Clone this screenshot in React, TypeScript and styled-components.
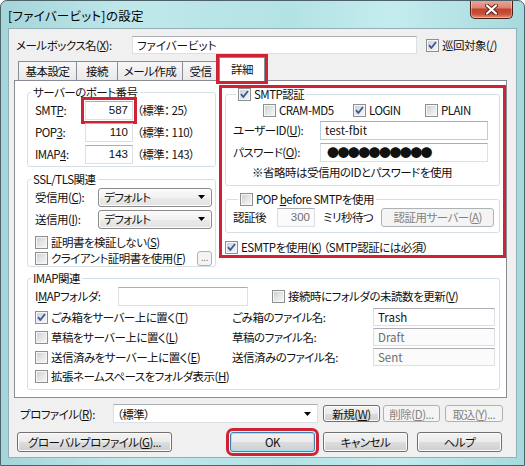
import React from "react";
import styled, { createGlobalStyle, css } from "styled-components";

const GlobalStyle = createGlobalStyle`
  html, body {
    margin: 0;
    padding: 0;
    background: #fff;
  }
  body {
    font-family: "Noto Sans CJK JP", "Noto Sans", sans-serif;
    font-size: 11.5px;
    letter-spacing: -0.5px;
    font-feature-settings: "palt";
    color: #111;
  }
  * {
    box-sizing: border-box;
  }
  u {
    text-underline-offset: 1px;
  }
`;

const RED = "#cf2234";

const Window = styled.div`
  width: 525px;
  height: 466px;
  display: flex;
  flex-direction: column;
  border: 1px solid #4d6268;
  border-radius: 7px 7px 0 0;
  background: linear-gradient(
    90deg,
    #a4d5da 0%,
    #c0e8eb 25%,
    #b3e2e5 55%,
    #c4ecee 75%,
    #a6dade 100%
  );
  overflow: hidden;
`;

const TitleBar = styled.div`
  height: 27px;
  display: flex;
  align-items: flex-start;
  justify-content: space-between;
  padding-left: 7px;
`;

const Title = styled.div`
  margin-top: 5px;
  font-size: 12.5px;
  letter-spacing: 0.3px;
  color: #000;
`;

const CloseButton = styled.div`
  width: 43px;
  height: 19px;
  margin-right: 11px;
  margin-top: -1px;
  border: 1px solid #4f1d16;
  border-top: none;
  border-radius: 0 0 5px 5px;
  background: linear-gradient(
    #e9ab9d 0%,
    #dc8571 42%,
    #c2432c 52%,
    #c9503a 78%,
    #e3946c 100%
  );
  box-shadow: inset 0 0 0 1px rgba(255, 255, 255, 0.35);
  display: flex;
  align-items: center;
  justify-content: center;
`;

const Client = styled.div`
  flex: 1;
  margin: 0 7px 7px 7px;
  background: #f0f0f0;
  border: 1px solid #93aeb4;
  display: flex;
  flex-direction: column;
`;

/* ---------- common controls ---------- */

const TextBox = styled.div<{
  $w: number;
  $h?: number;
  $right?: boolean;
  $disabled?: boolean;
  $focus?: boolean;
}>`
  width: ${(p) => p.$w}px;
  height: ${(p) => p.$h ?? 19}px;
  flex: none;
  border: 1px solid ${(p) => (p.$focus ? "#b4cfe6" : "#dbdfe6")};
  border-top-color: ${(p) => (p.$focus ? "#8fb4d4" : "#abadb3")};
  background: ${(p) => (p.$disabled ? "#fbfbfb" : "#fff")};
  color: ${(p) => (p.$disabled ? "#6d6d6d" : "#111")};
  display: flex;
  align-items: center;
  justify-content: ${(p) => (p.$right ? "flex-end" : "flex-start")};
  padding: 0 4px;
  white-space: nowrap;
  letter-spacing: 0;
  ${(p) =>
    p.$right &&
    css`
      font-family: "Liberation Sans", sans-serif;
    `}
`;

const Highlight = css`
  outline: 3px solid ${RED};
  outline-offset: 1px;
`;

const PortBox = styled(TextBox)<{ $mark?: boolean }>`
  ${(p) => p.$mark && Highlight}
`;

const Dots = styled.span`
  font-feature-settings: normal;
  font-size: 12px;
  letter-spacing: -1.6px;
  margin-left: 2px;
`;

const Button = styled.div<{
  $w: number;
  $h?: number;
  $disabled?: boolean;
  $default?: boolean;
  $mark?: boolean;
}>`
  width: ${(p) => p.$w}px;
  height: ${(p) => p.$h ?? 20}px;
  flex: none;
  border: 1px solid #707070;
  border-radius: 3px;
  background: linear-gradient(#f2f2f2 0%, #ebebeb 50%, #dddddd 51%, #cfcfcf 100%);
  box-shadow: inset 0 0 0 1px #fcfcfc;
  display: flex;
  align-items: center;
  justify-content: center;
  white-space: nowrap;
  ${(p) =>
    p.$disabled &&
    css`
      border-color: #adb2b5;
      background: #f4f4f4;
      box-shadow: none;
      color: #838383;
    `}
  ${(p) =>
    p.$default &&
    css`
      border-color: #3c7fb1;
      box-shadow: inset 0 0 0 1px #9fe2f9;
    `}
  ${(p) => p.$mark && Highlight}
`;

const ComboBox = styled.div<{ $w: number }>`
  width: ${(p) => p.$w}px;
  height: 19px;
  flex: none;
  border: 1px solid #8a8a8a;
  border-radius: 3px;
  background: linear-gradient(#fafafa 0%, #f1f1f1 50%, #e9e9e9 51%, #e3e3e3 100%);
  box-shadow: inset 0 0 0 1px #fdfdfd;
  display: flex;
  align-items: center;
  justify-content: space-between;
  padding: 0 6px 0 5px;
`;

const EditCombo = styled.div<{ $w: number }>`
  width: ${(p) => p.$w}px;
  height: 19px;
  flex: none;
  border: 1px solid #dbdfe6;
  border-top-color: #abadb3;
  background: #fff;
  display: flex;
  align-items: center;
  justify-content: space-between;
  padding: 0 6px 0 3px;
`;

const Arrow = () => (
  <svg width="7" height="4" viewBox="0 0 7 4">
    <path d="M0 0h7L3.5 4z" fill="#000" />
  </svg>
);

const CheckBoxFrame = styled.span`
  width: 13px;
  height: 13px;
  flex: none;
  border: 1px solid #8e8f8f;
  background: linear-gradient(135deg, #c9ccd1 0%, #e6e7e9 55%, #f8f8f8 100%);
  box-shadow: inset 0 0 0 1px #f6f6f6;
  display: inline-flex;
  align-items: center;
  justify-content: center;
`;

const CheckBox = ({ checked }: { checked?: boolean }) => (
  <CheckBoxFrame>
    {checked && (
      <svg width="11" height="11" viewBox="0 0 11 11">
        <path
          d="M2 5.2 L4.3 8 L9 2"
          fill="none"
          stroke="#3e5a9c"
          strokeWidth="1.9"
          strokeLinejoin="round"
        />
      </svg>
    )}
  </CheckBoxFrame>
);

const CheckItem = styled.div<{ $w?: number; $ml?: number }>`
  display: flex;
  align-items: center;
  gap: 3px;
  white-space: nowrap;
  ${(p) => p.$w !== undefined && `width: ${p.$w}px; flex: none;`}
  ${(p) => p.$ml !== undefined && `margin-left: ${p.$ml}px;`}
`;

const Label = styled.span<{ $w: number }>`
  width: ${(p) => p.$w}px;
  flex: none;
  white-space: nowrap;
`;

const Group = styled.fieldset<{ $mt?: number; $w?: number }>`
  margin: ${(p) => p.$mt ?? 0}px 0 0 0;
  padding: 0;
  border: 1px solid #d5dfe5;
  border-radius: 3px;
  min-width: 0;
  ${(p) => p.$w !== undefined && `width: ${p.$w}px;`}
`;

const Legend = styled.legend<{ $ml?: number; $lh?: number }>`
  margin-left: ${(p) => p.$ml ?? 3}px;
  padding: 0 2px;
  line-height: ${(p) => p.$lh ?? 14}px;
`;

const LegendInner = styled.span`
  display: inline-flex;
  align-items: center;
  gap: 3px;
  vertical-align: top;
`;

const GroupBody = styled.div<{ $pl?: number; $pb?: number }>`
  display: flex;
  flex-direction: column;
  padding: 0 0 ${(p) => p.$pb ?? 0}px ${(p) => p.$pl ?? 7}px;
`;

const Row = styled.div<{ $h: number; $mt?: number; $pr?: number }>`
  height: ${(p) => p.$h}px;
  margin-top: ${(p) => p.$mt ?? 0}px;
  padding-right: ${(p) => p.$pr ?? 0}px;
  display: flex;
  align-items: center;
  white-space: nowrap;
`;

const Std = styled.span`
  margin-left: 4px;
`;

/* ---------- top area ---------- */

const MailboxRow = styled.div`
  margin: 7px 0 0 7px;
  height: 18px;
  display: flex;
  align-items: center;
`;

const TabStrip = styled.div`
  margin-top: 3px;
  height: 24px;
  padding-left: 9px;
  display: flex;
  align-items: flex-end;
  position: relative;
  z-index: 2;
`;

const Tab = styled.div<{ $w: number; $active?: boolean }>`
  width: ${(p) => p.$w}px;
  height: 19px;
  margin-bottom: 1px;
  margin-right: -1px;
  border: 1px solid #898c95;
  border-bottom: none;
  background: linear-gradient(#f7f7f7, #e9e9e9);
  display: flex;
  align-items: center;
  justify-content: center;
  white-space: nowrap;
  ${(p) =>
    p.$active &&
    css`
      height: 24px;
      margin: 0 0 0 1px;
      background: #fff;
      outline: 3px solid ${RED};
      outline-offset: 0;
      padding-bottom: 2px;
    `}
`;

const Panel = styled.div`
  margin: -1px 0 0 5px;
  width: 493px;
  height: 318px;
  border: 1px solid #898c95;
  background: #fff;
  padding: 4px 0 0 12px;
  display: flex;
  flex-direction: column;
  position: relative;
  z-index: 1;
`;

const TopSection = styled.div`
  display: flex;
  align-items: flex-start;
  gap: 3px;
`;

const LeftCol = styled.div`
  width: 189px;
  display: flex;
  flex-direction: column;
`;

const RightBox = styled.div`
  width: 287px;
  border: 3px solid ${RED};
  padding: 0 3px 0 3px;
  display: flex;
  flex-direction: column;
`;

const Note = styled.div`
  height: 18px;
  padding-left: 19px;
  display: flex;
  align-items: center;
  white-space: nowrap;
`;

const Unit = styled.span`
  margin: 0 8px 0 8px;
`;

const EllipsisButton = styled(Button)`
  font-size: 10px;
  line-height: 1;
  padding-bottom: 3px;
`;

/* ---------- bottom area ---------- */

const ProfileRow = styled.div`
  margin-top: 6px;
  height: 19px;
  padding-left: 11px;
  display: flex;
  align-items: center;
`;

const ButtonRow = styled.div`
  margin-top: 9px;
  height: 20px;
  padding-left: 8px;
  display: flex;
  align-items: center;
`;

const Gap = styled.div<{ $w: number }>`
  width: ${(p) => p.$w}px;
  flex: none;
`;

const Spacer = styled.div`
  flex: 1;
`;

const CloseIcon = () => (
  <svg width="13" height="11" viewBox="0 0 13 11">
    <path
      d="M2 1.5 L11 9.5 M11 1.5 L2 9.5"
      stroke="#5a231a"
      strokeWidth="4"
      strokeLinecap="round"
    />
    <path
      d="M2 1.5 L11 9.5 M11 1.5 L2 9.5"
      stroke="#fff"
      strokeWidth="2.2"
      strokeLinecap="round"
    />
  </svg>
);

export default function App() {
  return (
    <>
      <GlobalStyle />
      <Window>
        <TitleBar>
          <Title>[ファイバービット]の設定</Title>
          <CloseButton>
            <CloseIcon />
          </CloseButton>
        </TitleBar>
        <Client>
          <MailboxRow>
            <Label $w={116}>
              メールボックス名(<u>X</u>):
            </Label>
            <TextBox $w={285} $h={18}>
              ファイバービット
            </TextBox>
            <CheckItem $ml={9}>
              <CheckBox checked />
              <span>
                巡回対象(<u>/</u>)
              </span>
            </CheckItem>
          </MailboxRow>

          <TabStrip>
            <Tab $w={59}>基本設定</Tab>
            <Tab $w={42}>接続</Tab>
            <Tab $w={66}>メール作成</Tab>
            <Tab $w={37}>受信</Tab>
            <Tab $w={46} $active>
              詳細
            </Tab>
          </TabStrip>

          <Panel>
            <TopSection>
              <LeftCol>
                <Group>
                  <Legend>サーバーのポート番号</Legend>
                  <GroupBody $pb={1}>
                    <Row $h={22}>
                      <Label $w={50}>
                        SMT<u>P</u>:
                      </Label>
                      <PortBox $w={48} $right $mark>
                        587
                      </PortBox>
                      <Std>（標準： 25）</Std>
                    </Row>
                    <Row $h={22}>
                      <Label $w={50}>
                        POP<u>3</u>:
                      </Label>
                      <PortBox $w={48} $right>
                        110
                      </PortBox>
                      <Std>（標準： 110）</Std>
                    </Row>
                    <Row $h={22}>
                      <Label $w={50}>
                        IMAP<u>4</u>:
                      </Label>
                      <PortBox $w={48} $right>
                        143
                      </PortBox>
                      <Std>（標準： 143）</Std>
                    </Row>
                  </GroupBody>
                </Group>

                <Group $mt={5}>
                  <Legend>SSL/TLS関連</Legend>
                  <GroupBody>
                    <Row $h={22}>
                      <Label $w={63}>
                        受信用(<u>C</u>):
                      </Label>
                      <ComboBox $w={114}>
                        <span>デフォルト</span>
                        <Arrow />
                      </ComboBox>
                    </Row>
                    <Row $h={22}>
                      <Label $w={63}>
                        送信用(<u>I</u>):
                      </Label>
                      <ComboBox $w={114}>
                        <span>デフォルト</span>
                        <Arrow />
                      </ComboBox>
                    </Row>
                    <Row $h={16} $mt={4}>
                      <CheckItem>
                        <CheckBox />
                        <span>
                          証明書を検証しない(<u>S</u>)
                        </span>
                      </CheckItem>
                    </Row>
                    <Row $h={16} $pr={3}>
                      <CheckItem>
                        <CheckBox />
                        <span>
                          クライアント証明書を使用(<u>F</u>)
                        </span>
                      </CheckItem>
                      <Spacer />
                      <EllipsisButton $w={15} $h={15} $disabled>
                        ...
                      </EllipsisButton>
                    </Row>
                  </GroupBody>
                </Group>
              </LeftCol>

              <RightBox>
                <Group>
                  <Legend $ml={10} $lh={13}>
                    <LegendInner>
                      <CheckBox checked />
                      <span>SMTP認証</span>
                    </LegendInner>
                  </Legend>
                  <GroupBody $pb={4}>
                    <Row $h={18}>
                      <CheckItem $w={90} $ml={30}>
                        <CheckBox />
                        <span>CRAM-MD5</span>
                      </CheckItem>
                      <CheckItem $w={72}>
                        <CheckBox checked />
                        <span>LOGIN</span>
                      </CheckItem>
                      <CheckItem>
                        <CheckBox />
                        <span>PLAIN</span>
                      </CheckItem>
                    </Row>
                    <Row $h={22}>
                      <Label $w={87}>
                        ユーザーID(<u>U</u>):
                      </Label>
                      <TextBox $w={168} $focus>
                        test-fbit
                      </TextBox>
                    </Row>
                    <Row $h={22}>
                      <Label $w={87}>
                        パスワード(<u>O</u>):
                      </Label>
                      <TextBox $w={168}>
                        <Dots>●●●●●●●●●●</Dots>
                      </TextBox>
                    </Row>
                    <Note>※省略時は受信用のIDとパスワードを使用</Note>
                  </GroupBody>
                </Group>

                <Group $mt={7}>
                  <Legend $ml={12} $lh={13}>
                    <LegendInner>
                      <CheckBox />
                      <span>
                        POP <u>b</u>efore SMTPを使用
                      </span>
                    </LegendInner>
                  </Legend>
                  <GroupBody $pb={4}>
                    <Row $h={22}>
                      <Label $w={44}>認証後</Label>
                      <TextBox $w={38} $right $disabled>
                        300
                      </TextBox>
                      <Unit>ミリ秒待つ</Unit>
                      <Spacer />
                      <Button $w={113} $h={19} $disabled>
                        認証用サーバー(<u>A</u>)
                      </Button>
                      <Gap $w={5} />
                    </Row>
                  </GroupBody>
                </Group>

                <Row $h={16} $mt={6}>
                  <CheckItem>
                    <CheckBox checked />
                    <span>
                      ESMTPを使用(<u>K</u>) （SMTP認証には必須）
                    </span>
                  </CheckItem>
                </Row>
              </RightBox>
            </TopSection>

            <Group $mt={4} $w={473}>
              <Legend>IMAP関連</Legend>
              <GroupBody $pb={4}>
                <Row $h={22}>
                  <Label $w={83}>
                    I<u>M</u>APフォルダ:
                  </Label>
                  <TextBox $w={130} />
                  <CheckItem $ml={24}>
                    <CheckBox />
                    <span>
                      接続時にフォルダの未読数を更新(<u>V</u>)
                    </span>
                  </CheckItem>
                </Row>
                <Row $h={20}>
                  <CheckItem $w={197}>
                    <CheckBox checked />
                    <span>
                      ごみ箱をサーバー上に置く(<u>T</u>)
                    </span>
                  </CheckItem>
                  <Label $w={141}>ごみ箱のファイル名:</Label>
                  <TextBox $w={122} $h={18}>
                    Trash
                  </TextBox>
                </Row>
                <Row $h={20}>
                  <CheckItem $w={197}>
                    <CheckBox />
                    <span>
                      草稿をサーバー上に置く(<u>L</u>)
                    </span>
                  </CheckItem>
                  <Label $w={141}>草稿のファイル名:</Label>
                  <TextBox $w={122} $h={18} $disabled>
                    Draft
                  </TextBox>
                </Row>
                <Row $h={20}>
                  <CheckItem $w={197}>
                    <CheckBox />
                    <span>
                      送信済みをサーバー上に置く(<u>E</u>)
                    </span>
                  </CheckItem>
                  <Label $w={141}>送信済みのファイル名:</Label>
                  <TextBox $w={122} $h={18} $disabled>
                    Sent
                  </TextBox>
                </Row>
                <Row $h={18}>
                  <CheckItem>
                    <CheckBox />
                    <span>
                      拡張ネームスペースをフォルダ表示(<u>H</u>)
                    </span>
                  </CheckItem>
                </Row>
              </GroupBody>
            </Group>
          </Panel>

          <ProfileRow>
            <Label $w={93}>
              プロファイル(<u>R</u>):
            </Label>
            <EditCombo $w={205}>
              <span>（標準）</span>
              <Arrow />
            </EditCombo>
            <Gap $w={5} />
            <Button $w={57} $h={17}>
              新規(<u>W</u>)
            </Button>
            <Gap $w={3} />
            <Button $w={57} $h={17} $disabled>
              削除(<u>D</u>)...
            </Button>
            <Gap $w={5} />
            <Button $w={58} $h={17} $disabled>
              取込(<u>Y</u>)...
            </Button>
          </ProfileRow>

          <ButtonRow>
            <Button $w={155}>
              グローバルプロファイル(<u>G</u>)...
            </Button>
            <Gap $w={58} />
            <Button $w={85} $default $mark>
              OK
            </Button>
            <Gap $w={8} />
            <Button $w={85}>キャンセル</Button>
            <Gap $w={9} />
            <Button $w={85}>ヘルプ</Button>
          </ButtonRow>
        </Client>
      </Window>
    </>
  );
}
